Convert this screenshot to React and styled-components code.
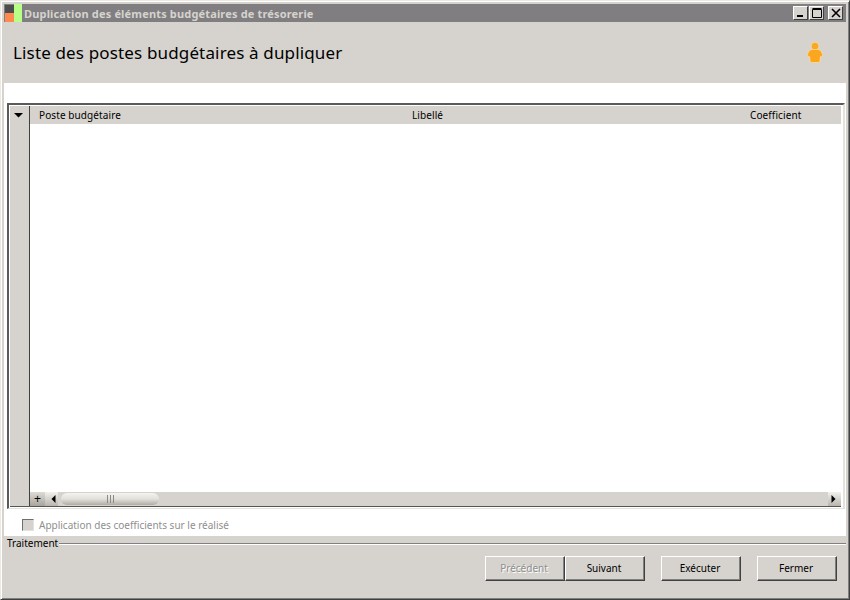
import React from 'react';
import styled, { createGlobalStyle } from 'styled-components';

const Global = createGlobalStyle`
  html, body { margin: 0; padding: 0; background: #d6d3ce; }
  * { box-sizing: border-box; }
  body { font-family: "Noto Sans", "Liberation Sans", sans-serif; }
`;
const Win = styled.div`
  width: 850px; height: 600px; display: flex; flex-direction: column;
  background: #d6d3ce; padding: 3px 3px 1px 3px;
  border: 1px solid; border-color: #ece9e2 #404040 #404040 #ece9e2;
  box-shadow: inset 1px 1px 0 #fff, inset -1px -1px 0 #808080;
`;
const TitleBar = styled.div`
  height: 18px; background: #807e80; display: flex; align-items: center; flex: none;
`;
const TitleText = styled.span`
  font: bold 11px "Noto Sans", sans-serif; color: #d6d3ce; margin-left: 2px; letter-spacing: .16px;
`;
const WinControls = styled.div`
  margin-left: auto; display: flex; margin-right: 3px; gap: 1px;
`;
const CtlButton = styled.div`
  width: 15px; height: 14px; background: #d6d3ce; margin-left: ${p => p.$gap || 0}px;
  border: 1px solid; border-color: #fff #404040 #404040 #fff;
  display: flex; align-items: center; justify-content: center;
`;
const Header = styled.div`
  height: 61px; flex: none; display: flex; align-items: center; justify-content: space-between;
  padding: 0 23px 0 9px;
`;
const HeaderTitle = styled.h1`
  margin: 0; font: 400 17px "Noto Sans", sans-serif; color: #000; letter-spacing: .15px;
`;
const White = styled.div`
  flex: none; height: 453px; background: #fff; padding: 20px 1px 0 3px;
  display: flex; flex-direction: column;
`;
const Frame = styled.div`
  height: 406px; flex: none; display: flex;
  border-style: solid; border-width: 2px 2px 1px 2px;
  border-color: #5a5a5a #e4e2dc #e4e2dc #5a5a5a;
  background: #fff; padding: 1px 2px 1px 1px;
`;
const FrameInner = styled.div`
  flex: 1; display: flex; min-width: 0; border-bottom: 1px solid #555;
`;
const Gutter = styled.div`
  width: 20px; flex: none; background: #d6d3ce; border-right: 1px solid #404040;
  display: flex; justify-content: center; padding: 5px 3px 0 0;
`;
const GridArea = styled.div`
  flex: 1; display: flex; flex-direction: column; min-width: 0;
`;
const HeadRow = styled.div`
  height: 18px; flex: none; background: #d6d3ce; display: grid;
  grid-template-columns: 373px 338px 1fr; padding-left: 9px; align-items: center;
  font: 10px "Noto Sans", sans-serif; color: #000; letter-spacing: .1px;
`;
const Body = styled.div`flex: 1;`;
const ScrollBar = styled.div`
  height: 14px; flex: none; background: #d6d3ce; display: flex; align-items: center;
`;
const PlusCell = styled.div`
  width: 15px; height: 14px; display: flex; align-items: center; justify-content: center;
  font: 12px "Liberation Sans", sans-serif; color: #000;
  background: linear-gradient(#dedbd5, #a8a59e);
`;
const ArrowBtn = styled.div`
  width: 13px; height: 14px; display: flex; align-items: center; justify-content: center;
  background: linear-gradient(#f2f1ed, #b8b5ad);
`;
const Thumb = styled.div`
  width: 98px; height: 12px; margin-left: 3px; border-radius: 6px;
  background: linear-gradient(#f4f3f0, #e2e0da 50%, #b0aca4);
  display: flex; align-items: center; justify-content: center; gap: 2px;
`;
const Grip = styled.span`width: 1px; height: 8px; background: #8a8a84;`;
const Spacer = styled.div`flex: 1;`;
const CheckRow = styled.div`
  display: flex; align-items: center; padding-left: 15px; margin-top: 9px; gap: 5px;
  font: 10px "Noto Sans", sans-serif; color: #8f8f8f;
`;
const CheckBox = styled.span`
  width: 12px; height: 12px; background: #d6d3ce;
  border: 1px solid; border-color: #6e6e6e #e4e2dc #e4e2dc #6e6e6e;
`;
const Footer = styled.div`
  flex: 1; padding: 0 0 0 3px;
`;
const Legend = styled.div`
  display: flex; align-items: center; gap: 1px;
  font: 10px "Noto Sans", sans-serif; color: #000; height: 13px;
`;
const LegendLine = styled.span`
  flex: 1; height: 2px; border-top: 1px solid #808080; border-bottom: 1px solid #fff; margin-top: 2px;
`;
const Buttons = styled.div`
  display: flex; justify-content: flex-end; padding-right: 9px; margin-top: 7px;
`;
const Btn = styled.button`
  width: 80px; height: 25px; padding: 0 2px 2px 0; background: #d6d3ce; margin-left: ${p => p.$gap || 0}px;
  border: 1px solid; border-color: #fff #404040 #404040 #fff;
  box-shadow: inset -1px -1px 0 #808080;
  font: 10px "Noto Sans", sans-serif; color: ${p => p.disabled ? '#8f8f8f' : '#000'};
  ${p => p.disabled ? 'text-shadow: 1px 1px 0 #fff;' : ''}
`;

const AppIcon = () => (
  <svg width="18" height="18" viewBox="0 0 18 18" style={{flex:'none'}}>
    <rect x="1" y="1" width="9" height="8" fill="#4d4d4d"/>
    <rect x="1" y="9" width="9" height="9" fill="#ff8a50"/>
    <rect x="10" y="0" width="8" height="18" fill="#b8ff88"/>
  </svg>
);
const Person = () => (
  <svg width="16" height="21" viewBox="0 0 16 21">
    <circle cx="8" cy="4.2" r="3.9" fill="#f9a825" stroke="#fff0c8" strokeWidth=".5"/>
    <path d="M4.5 7.5 H11.5 Q14.5 8 15.5 12.5 Q16 15 13.3 14.8 L13 19 Q13 20.5 11 20.5 H5 Q3 20.5 3 19 L2.7 14.8 Q0 15 .5 12.5 Q1.5 8 4.5 7.5Z" fill="#fba61f" stroke="#ffe6b0" strokeWidth=".6"/>
  </svg>
);
const Tri = ({dir}) => (
  <svg width="9" height="8" viewBox="0 0 9 8">
    {dir === 'down' && <path d="M0 2H9L4.5 6.5Z" fill="#000"/>}
    {dir === 'left' && <path d="M8.5 0V8L4.5 4Z" fill="#000"/>}
    {dir === 'right' && <path d="M1.5 0V8L5.5 4Z" fill="#000"/>}
  </svg>
);

export default function App() {
  return (
    <Win>
      <Global />
      <TitleBar>
        <AppIcon />
        <TitleText>Duplication des éléments budgétaires de trésorerie</TitleText>
        <WinControls>
          <CtlButton><svg width="10" height="10" viewBox="0 0 10 10"><rect x="1" y="7" width="6" height="2" fill="#000"/></svg></CtlButton>
          <CtlButton><svg width="10" height="10" viewBox="0 0 10 10"><path d="M.5 1.5H9.5V9.5H.5Z M.5 .5H9.5" fill="none" stroke="#000"/></svg></CtlButton>
          <CtlButton $gap={3}><svg width="10" height="10" viewBox="0 0 10 10"><path d="M1 1L9 9M9 1L1 9" stroke="#000" strokeWidth="1.6"/></svg></CtlButton>
        </WinControls>
      </TitleBar>
      <Header>
        <HeaderTitle>Liste des postes budgétaires à dupliquer</HeaderTitle>
        <Person />
      </Header>
      <White>
        <Frame>
          <FrameInner>
            <Gutter><Tri dir="down" /></Gutter>
            <GridArea>
              <HeadRow><span>Poste budgétaire</span><span>Libellé</span><span>Coefficient</span></HeadRow>
              <Body />
              <ScrollBar>
                <PlusCell>+</PlusCell>
                <ArrowBtn><Tri dir="left" /></ArrowBtn>
                <Thumb><Grip /><Grip /><Grip /></Thumb>
                <Spacer />
                <ArrowBtn><Tri dir="right" /></ArrowBtn>
              </ScrollBar>
            </GridArea>
          </FrameInner>
        </Frame>
        <CheckRow><CheckBox />Application des coefficients sur le réalisé</CheckRow>
      </White>
      <Footer>
        <Legend>Traitement<LegendLine /></Legend>
        <Buttons>
          <Btn disabled>Précédent</Btn>
          <Btn>Suivant</Btn>
          <Btn $gap={16}>Exécuter</Btn>
          <Btn $gap={16}>Fermer</Btn>
        </Buttons>
      </Footer>
    </Win>
  );
}
